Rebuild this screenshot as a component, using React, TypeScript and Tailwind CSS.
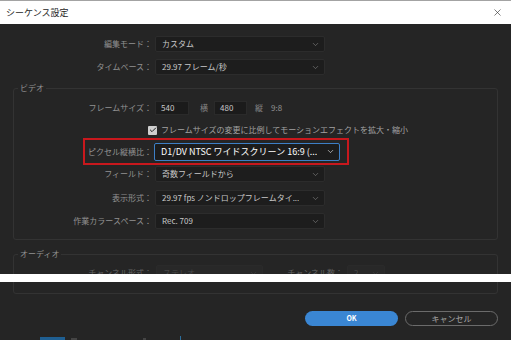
import { Check, ChevronDown, X } from "lucide-react"

const Select = ({ value, width = "w-[170px]", active = false, disabled = false }: { value: string; width?: string; active?: boolean; disabled?: boolean }) => {
    let look = "h-[16px] border-[#2c2c2c] bg-[#1d1d1d] text-[8px] text-[#c8c8c8]"
    if (active) look = "h-[18px] border-[#3d7fc6] bg-[#1c1c1c] text-[9px] text-white"
    if (disabled) look = "h-[16px] border-[#2a2a2a] bg-[#282828] text-[8px] text-[#474747]"
    return (
        <div className={`flex ${width} items-center justify-between rounded-[2px] border pl-[6px] pr-[4px] ${look}`}>
            <span className="truncate">{value}</span>
            <ChevronDown size={9} strokeWidth={1.5} className={active ? "text-white" : disabled ? "text-[#444]" : "text-[#8c8c8c]"} />
        </div>
    )
}

const Label = ({ text, width, dim = false }: { text: string; width: string; dim?: boolean }) => (
    <span className={`${width} shrink-0 text-right text-[8px] ${dim ? "text-[#626262]" : "text-[#929292]"}`}>{text}</span>
)

export default function App() {
    return (
        <div className="relative h-[340px] w-[511px] overflow-hidden bg-[#252525] font-['Noto_Sans_CJK_JP',sans-serif]">
            <header className="flex h-6 items-center justify-between border-t border-[#a3a3a3] bg-white pl-[6px] pr-[8px]">
                <span className="text-[9px] text-[#1e1e1e]">シーケンス設定</span>
                <X size={11} strokeWidth={1.4} className="text-[#333]" />
            </header>

            <div className="mt-[12px] flex items-center gap-[3px]">
                <Label text="編集モード：" width="w-[152px]" />
                <Select value="カスタム" />
            </div>
            <div className="mt-[7px] flex items-center gap-[3px]">
                <Label text="タイムベース：" width="w-[152px]" />
                <Select value="29.97  フレーム/秒" />
            </div>

            <fieldset className="mx-[13px] mt-[7px] rounded-[3px] border border-[#333] pb-[10px]">
                <legend className="ml-[4px] px-[2px] text-[8px] leading-[12px] text-[#929292]">ビデオ</legend>
                <div className="mt-[7px] flex h-[14px] items-center text-[8px]">
                    <Label text="フレームサイズ：" width="w-[138px]" />
                    <div className="ml-[3px] flex h-[14px] w-[34px] items-center border border-[#2a2a2a] bg-[#1b1b1b] pl-[5px] text-[#c8c8c8]">540</div>
                    <span className="ml-[11px] text-[#858585]">横</span>
                    <div className="ml-[6px] flex h-[14px] w-[33px] items-center border border-[#2a2a2a] bg-[#1b1b1b] pl-[5px] text-[#c8c8c8]">480</div>
                    <span className="ml-[8px] text-[#858585]">縦</span>
                    <span className="ml-[8px] text-[#929292]">9:8</span>
                </div>
                <div className="mt-[10px] flex h-[10px] items-center">
                    <div className="ml-[134px] flex h-[9px] w-[9px] items-center justify-center rounded-[1px] bg-[#cfcfcf]">
                        <Check size={8} strokeWidth={3} className="text-[#222]" />
                    </div>
                    <span className="ml-[4px] text-[8px] text-[#a2a2a2]">フレームサイズの変更に比例してモーションエフェクトを拡大・縮小</span>
                </div>
                <div className="ml-[69px] mt-[3px] flex h-[27px] w-[266px] items-center gap-[2px] border-2 border-[#c8181d]">
                    <Label text="ピクセル縦横比：" width="w-[67px]" />
                    <Select value="D1/DV NTSC ワイドスクリーン 16:9 (..." width="w-[186px]" active />
                </div>
                <div className="mt-[1px] flex items-center gap-[3px]">
                    <Label text="フィールド：" width="w-[138px]" />
                    <Select value="奇数フィールドから" />
                </div>
                <div className="mt-[8px] flex items-center gap-[3px]">
                    <Label text="表示形式：" width="w-[138px]" />
                    <Select value="29.97 fps ノンドロップフレームタイ..." />
                </div>
                <div className="mt-[7px] flex items-center gap-[3px]">
                    <Label text="作業カラースペース：" width="w-[138px]" />
                    <Select value="Rec. 709" />
                </div>
            </fieldset>

            <fieldset className="mx-[13px] mt-[8px] rounded-[3px] border border-[#333] pb-[12px]">
                <legend className="ml-[4px] px-[2px] text-[8px] leading-[12px] text-[#929292]">オーディオ</legend>
                <div className="mt-[5px] flex items-center">
                    <Label text="チャンネル形式：" width="w-[138px]" dim />
                    <div className="ml-[4px]">
                        <Select value="ステレオ" width="w-[107px]" disabled />
                    </div>
                    <Label text="チャンネル数：" width="w-[80px]" dim />
                    <div className="ml-[4px]">
                        <Select value="2" width="w-[38px]" disabled />
                    </div>
                </div>
            </fieldset>

            <div className="mt-[17px] flex justify-end gap-[7px] pr-[13px]">
                <button className="flex h-[15px] w-[93px] items-center justify-center rounded-full bg-[#3a86d3] text-[7px] font-bold text-white">OK</button>
                <button className="flex h-[15px] w-[93px] items-center justify-center rounded-full border border-[#6b6b6b] text-[8px] text-[#a5a5a5]">キャンセル</button>
            </div>

            <div className="mt-[10px] flex h-[4px] items-end gap-[6px] pl-[40px]">
                <div className="h-[3px] w-[25px] bg-[#1f5f92]" />
                <div className="h-[2px] w-[6px] bg-[#444]" />
                <div className="ml-[60px] h-[2px] w-[3px] bg-[#444]" />
                <div className="ml-[28px] h-[4px] w-[1px] bg-[#2c6e9c]" />
            </div>

            <div className="absolute left-0 right-0 top-[274px] h-[8px] bg-white" />
        </div>
    )
}
